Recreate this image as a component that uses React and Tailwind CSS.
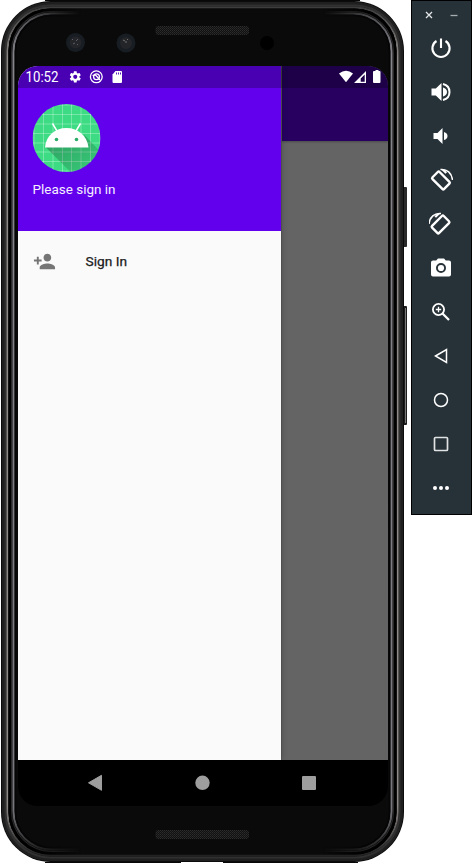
import React from "react";

function Frame() {
  return (
    <svg className="absolute inset-0" width="411" height="864" viewBox="0 0 411 864" fill="none">
      <defs>
        <linearGradient id="sides" gradientUnits="userSpaceOnUse" x1="0" y1="0" x2="404" y2="0">
          <stop offset="0" stopColor="white" />
          <stop offset="0.08" stopColor="white" />
          <stop offset="0.2" stopColor="black" />
          <stop offset="0.8" stopColor="black" />
          <stop offset="0.92" stopColor="white" />
          <stop offset="1" stopColor="white" />
        </linearGradient>
        <mask id="fade" maskUnits="userSpaceOnUse" x="0" y="0" width="411" height="864">
          <rect width="411" height="864" fill="url(#sides)" />
        </mask>
        <linearGradient id="shine" x1="0" y1="0" x2="0" y2="1">
          <stop offset="0" stopColor="#4c4c50" />
          <stop offset="0.05" stopColor="#85858c" />
          <stop offset="0.95" stopColor="#77777d" />
          <stop offset="1" stopColor="#222" />
        </linearGradient>
        <linearGradient id="edge" x1="0" y1="0" x2="0" y2="1">
          <stop offset="0" stopColor="#3d3d3d" />
          <stop offset="0.06" stopColor="#8e8a88" />
          <stop offset="0.94" stopColor="#8e8a88" />
          <stop offset="1" stopColor="#222" />
        </linearGradient>
        <pattern id="mesh" width="2" height="2" patternUnits="userSpaceOnUse">
          <rect width="2" height="2" fill="#111" />
          <rect width="1" height="1" fill="#2c2c2c" />
          <rect x="1" y="1" width="1" height="1" fill="#242424" />
        </pattern>
      </defs>
      <rect x="402" y="187" width="5" height="60" rx="1" fill="#292929" />
      <rect x="402" y="306" width="5" height="119" rx="1" fill="#1c1c1c" />
      <path d="M405.500 308V423" stroke="#777" />
      <path d="M45 .5H360M45 862.500H181M223 862.500H358" stroke="#080808" />
      <rect x="1" y="1" width="403" height="861" rx="50" fill="#0b0b0b" />
      <rect x="3.500" y="3.500" width="398" height="856" rx="47" stroke="#1f1f1f" strokeWidth="3" />
      <rect x="5.500" y="5.500" width="394" height="852" rx="45" stroke="#303030" strokeWidth="2" />
      <rect x="7.500" y="7.500" width="390" height="848" rx="43" stroke="url(#edge)" strokeWidth="2" />
      <rect x="8.500" y="8.500" width="388" height="846" rx="42" fill="#0a0a0a" />
      <g mask="url(#fade)">
        <rect x="9.700" y="9.700" width="385.600" height="843.600" rx="41" stroke="#000" strokeWidth="2.500" />
        <rect x="11.500" y="11.500" width="382" height="840" rx="40" stroke="#2a2a2a" />
        <rect x="13.500" y="13.500" width="378" height="836" rx="38" stroke="url(#shine)" strokeWidth="2" />
        <rect x="15.500" y="15.500" width="374" height="832" rx="36" stroke="#050505" strokeWidth="1.500" />
      </g>
      <rect x="155.500" y="26" width="93.500" height="9" rx="3" fill="url(#mesh)" />
      <rect x="155.500" y="830" width="93.500" height="9" rx="3" fill="url(#mesh)" />
      <circle cx="75.500" cy="42.500" r="9.500" fill="#171d22" />
      <circle cx="75.500" cy="42.500" r="6" fill="#242528" />
      <path d="M73 44l2-1M76 41l2-2M72 39l1 1M77 45l1-1" stroke="#6b6c80" strokeWidth=".8" />
      <circle cx="126" cy="43" r="9.500" fill="#171d22" />
      <circle cx="126" cy="43" r="6" fill="#242528" />
      <path d="M125 42h2M123 40l2 1M128 39l-1 1" stroke="#858585" strokeWidth=".8" />
      <circle cx="267" cy="43" r="7" fill="#000" />
    </svg>
  );
}

function StatusBar() {
  return (
    <div className="absolute inset-x-0 top-0 z-20 h-[22px] bg-black/25 text-white">
      <svg width="370" height="22" viewBox="18 66 370 22" fill="white">
        <text x="25.500" y="82" fontSize="14" textLength="33" lengthAdjust="spacingAndGlyphs" fontFamily="Roboto, sans-serif">10:52</text>
        <g transform="translate(68.300 69.900) scale(.58)">
          <path d="M19.140 12.940c.04-.3.06-.61.06-.94 0-.32-.02-.64-.07-.94l2.030-1.580c.18-.14.23-.41.12-.61l-1.920-3.320c-.12-.22-.37-.29-.59-.22l-2.390.96c-.5-.38-1.030-.7-1.620-.94l-.36-2.540c-.04-.24-.24-.41-.48-.41h-3.840c-.24 0-.43.17-.47.41l-.36 2.540c-.59.24-1.130.57-1.620.94l-2.390-.96c-.22-.08-.47 0-.59.22L2.740 8.870c-.12.21-.08.47.12.61l2.030 1.580c-.05.3-.09.63-.09.94s.02.64.07.94l-2.030 1.580c-.18.14-.23.41-.12.61l1.920 3.320c.12.22.37.29.59.22l2.390-.96c.5.38 1.030.7 1.620.94l.36 2.540c.05.24.24.41.48.41h3.840c.24 0 .44-.17.47-.41l.36-2.540c.59-.24 1.130-.56 1.620-.94l2.390.96c.22.08.47 0 .59-.22l1.920-3.320c.12-.22.07-.47-.12-.61zM12 15.600A3.600 3.600 0 1 1 12 8.400a3.600 3.600 0 0 1 0 7.200z" />
        </g>
        <circle cx="96.300" cy="76.800" r="5.900" fill="none" stroke="white" strokeWidth="1.300" />
        <circle cx="96.500" cy="76.800" r="2.900" fill="none" stroke="white" strokeWidth="1.300" />
        <path d="M92.500 75.500l3-.5 4.500 5" stroke="white" strokeWidth="1.200" fill="none" />
        <path d="M115.500 71h5.500q1 0 1 1v10q0 1-1 1h-7.500q-1 0-1-1v-7.500z" />
        <path d="M116.500 72.500v2M118.500 72.500v2M120.500 72.500v2" stroke="#4900b0" strokeWidth=".9" />
        <path d="M339 73.500q7-5.500 14 0L346 82.300z" />
        <path fillRule="evenodd" d="M366 71v12h-12zM364.700 74.500l-4 4v3.200h4z" />
        <path d="M374.500 71h1v-1h3v1h1q1 0 1 1v10q0 1-1 1h-5.500q-1 0-1-1V72q0-1 1-1z" />
      </svg>
    </div>
  );
}

function Avatar() {
  return (
    <svg className="block" width="69" height="68" viewBox="-.5 0 69 68">
      <defs>
        <clipPath id="avatar"><circle cx="34" cy="34" r="34" /></clipPath>
        <linearGradient id="shadow" x1="0" y1="0" x2="1" y2="1">
          <stop stopOpacity=".3" /><stop offset="1" stopOpacity=".06" />
        </linearGradient>
      </defs>
      <g clipPath="url(#avatar)">
        <rect width="68" height="68" fill="#3ddc84" />
        <path d="M1.500 0v68M11 0v68M20.500 0v68M30 0v68M39 0v68M48.500 0v68M58 0v68M67.500 0v68M0 1h68M0 10.500h68M0 20h68M0 29.500h68M0 39h68M0 48h68M0 57.500h68M0 67h68" stroke="white" strokeOpacity=".38" strokeWidth=".8" />
        <path d="M13 43L39 69H69V49L51 30L56 43z" fill="url(#shadow)" />
      </g>
      <path d="M12.500 43.500C13.500 32 22 24 34 24s20.500 8 22 19.500z" fill="white" />
      <path d="M24.500 27L20 19.500M43.500 27L48 19.500" stroke="white" strokeWidth="1.500" />
      <circle cx="24" cy="35.500" r="1.800" fill="#2cad69" />
      <circle cx="44" cy="35.500" r="1.800" fill="#2cad69" />
    </svg>
  );
}

function Screen() {
  return (
    <div className="absolute left-[18px] top-[66px] flex h-[740px] w-[370px] flex-col overflow-hidden rounded-[20px] bg-black">
      <div className="flex h-[694px]">
        <aside className="z-10 w-[263px] shrink-0 bg-[#fafafa] shadow-[1px_0_6px_#0003]">
          <header className="flex h-[165px] flex-col bg-[#6200ee] pl-[14px] pt-[38px]">
            <Avatar />
            <svg className="mt-[6px]" width="100" height="22" fill="#f5effe">
              <text x="0.500" y="16" fontSize="13.500" textLength="83" lengthAdjust="spacingAndGlyphs" fontFamily="Roboto, sans-serif">Please sign in</text>
            </svg>
          </header>
          <div className="flex h-[60px] items-center pl-[15px]">
            <svg width="23" height="23" viewBox="0 0 24 24" fill="#757575">
              <path d="M15 12c2.210 0 4-1.790 4-4s-1.790-4-4-4-4 1.790-4 4 1.790 4 4 4zm-9-2V7H4v3H1v2h3v3h2v-3h3v-2H6zm9 4c-2.670 0-8 1.340-8 4v2h16v-2c0-2.660-5.330-4-8-4z" />
            </svg>
            <svg className="ml-[29px]" width="60" height="20" fill="#202020" stroke="#202020" strokeWidth=".25">
              <text x="0.500" y="15.300" fontSize="13.500" textLength="41.500" lengthAdjust="spacingAndGlyphs" fontFamily="Roboto, sans-serif">Sign In</text>
            </svg>
          </div>
        </aside>
        <div className="flex-1 border-l border-black/10 bg-[#646464]">
          <div className="h-[75px] bg-[#270060] shadow-[0_1px_2px_#0004]" />
        </div>
      </div>
      <svg width="370" height="46" viewBox="18 760 370 46" fill="#9e9e9e">
        <path d="M88.500 782.800l13-7.500v15z" stroke="#9e9e9e" strokeLinejoin="round" />
        <circle cx="202.500" cy="782.800" r="7.200" />
        <rect x="302" y="776" width="14" height="14" rx="1" />
      </svg>
      <StatusBar />
    </div>
  );
}

function Icon({ children }) {
  return (
    <div className="flex h-[44px] items-center justify-center">
      <svg width="24" height="24" viewBox="0 0 24 24" fill="white">{children}</svg>
    </div>
  );
}

function Rotate() {
  return (
    <>
      <rect x="7" y="4.200" width="10" height="16.500" rx="1.300" transform="rotate(-45 12 12.500)" fill="none" stroke="white" strokeWidth="2.400" />
      <path d="M11.500 1.500C18 .8 22.800 5 23.500 12" fill="none" stroke="white" strokeWidth="1.500" />
      <path d="M11.500 1l5 4.800 1.500-1.400-2.500-2.900z" />
    </>
  );
}

function Toolbar() {
  return (
    <aside className="ml-[411px] h-[515px] w-[61px] border border-black bg-[#273238] pr-[2px]">
      <div className="flex h-[25px] items-center justify-center pt-[3px]">
        <svg width="36" height="12" stroke="#e4e6e7" strokeWidth="1.300">
          <path d="M3 3l6 6M9 3l-6 6" /><path d="M27.500 6.500h7" stroke="#a5adb1" />
        </svg>
      </div>
      <Icon><path d="M12 2.500V12M7.500 5A8.600 8.600 0 1 0 16.500 5" fill="none" stroke="white" strokeWidth="2.100" /></Icon>
      <Icon>
        <path d="M2.500 8.500h4.300L12.500 3v18l-5.700-5.500H2.500zM14 7.500q4 1.300 4 4.500t-4 4.500z" />
        <path d="M14 4Q20.500 5.500 20.500 12T14 20" fill="none" stroke="white" strokeWidth="2" />
      </Icon>
      <Icon><path d="M4.500 9h4l5-5v16l-5-5h-4zM15 8q3.500 1 3.500 4T15 16z" /></Icon>
      <Icon><Rotate /></Icon>
      <Icon><g transform="translate(23.500 0) scale(-1 1)"><Rotate /></g></Icon>
      <Icon>
        <path fillRule="evenodd" d="M9 2.500h6l1.800 2H20q2 0 2 2v12q0 2-2 2H4q-2 0-2-2v-12q0-2 2-2h3.200zM12 7a5 5 0 1 0 0 10 5 5 0 0 0 0-10z" />
        <circle cx="12" cy="12" r="3.100" />
      </Icon>
      <Icon>
        <g fill="none" stroke="white" strokeWidth="1.800">
          <circle cx="9.500" cy="9.500" r="5.600" /><path d="M13.500 13.500L20 20" strokeWidth="2.300" /><path d="M6.800 9.500h5.400M9.500 6.800v5.400" strokeWidth="1.300" />
        </g>
      </Icon>
      <Icon><path d="M6.500 12L17.500 5.500v13z" fill="none" stroke="white" strokeWidth="1.500" /></Icon>
      <Icon><circle cx="12" cy="12" r="6.500" fill="none" stroke="white" strokeWidth="1.500" /></Icon>
      <Icon><rect x="5.500" y="5.500" width="13" height="13" rx="1" fill="none" stroke="#e0e2e3" strokeWidth="1.700" /></Icon>
      <Icon><circle cx="6" cy="12" r="2" /><circle cx="12" cy="12" r="2" /><circle cx="18" cy="12" r="2" /></Icon>
    </aside>
  );
}

export default function App() {
  return (
    <main className="relative h-[864px] w-[472px] overflow-hidden bg-white">
      <Frame />
      <Screen />
      <Toolbar />
    </main>
  );
}
